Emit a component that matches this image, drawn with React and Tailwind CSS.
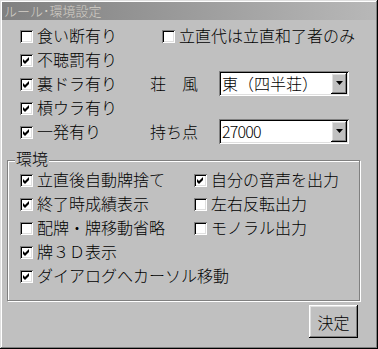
import React from 'react';

const sunken = "shadow-[inset_1px_1px_0_#808080,inset_-1px_-1px_0_#ffffff,inset_2px_2px_0_#000000,inset_-2px_-2px_0_#dfdfdf]";
const raised = "shadow-[inset_-1px_-1px_0_#000000,inset_1px_1px_0_#ffffff,inset_-2px_-2px_0_#808080,inset_2px_2px_0_#dfdfdf]";

function CheckBox({ checked, label, className = "" }) {
  return (
    <label className={"flex items-center gap-[4px] " + className}>
      <span className={"w-[13px] h-[13px] shrink-0 bg-white mt-[2px] " + sunken}>
        {checked && (
          <svg width="13" height="13" viewBox="0 0 13 13">
            <path d="M3 5 L5 7 L9 3 L9 6 L5 10 L3 8 Z" fill="#000" />
          </svg>
        )}
      </span>
      <span className="whitespace-nowrap">{label}</span>
    </label>
  );
}

function ComboBox({ value, digits }) {
  return (
    <div className={"w-[130px] h-[25px] bg-white flex items-center p-[2px] " + sunken}>
      <span className={"flex-1 pl-[1px] " + (digits ? "tracking-[-0.8px]" : "")}>
        {value}
      </span>
      <span className={"w-[16px] h-full bg-[#c0c0c0] flex items-center justify-center " + raised}>
        <svg width="7" height="4" viewBox="0 0 7 4">
          <path d="M0 0 H7 L3.5 4 Z" fill="#000" />
        </svg>
      </span>
    </div>
  );
}

export default function App() {
  return (
    <div className="w-[378px] h-[349px] bg-[#c0c0c0] p-[2px] flex flex-col text-black text-[16px] leading-[16px] font-light font-['Noto_Sans_CJK_JP',sans-serif] shadow-[inset_-1px_-1px_0_#000000,inset_1px_1px_0_#dfdfdf,inset_-2px_-2px_0_#808080,inset_2px_2px_0_#ffffff]">
      <div className="h-[18px] shrink-0 bg-gradient-to-r from-[#808080] to-[#b8b8b8] flex items-center pl-[2px] text-[13px] text-[#d4d0c8]">
        ルール･環境設定
      </div>

      <div className="mt-[3px] pl-[18px] flex flex-col">
        <div className="h-[24px] flex items-center">
          <CheckBox label="食い断有り" className="w-[142px]" />
          <CheckBox label="立直代は立直和了者のみ" />
        </div>
        <div className="h-[24px] flex items-center">
          <CheckBox checked label="不聴罰有り" />
        </div>
        <div className="h-[24px] flex items-center">
          <CheckBox checked label="裏ドラ有り" className="w-[130px]" />
          <span className="w-[69px]">荘　風</span>
          <ComboBox value="東（四半荘）" />
        </div>
        <div className="h-[24px] flex items-center">
          <CheckBox checked label="槓ウラ有り" />
        </div>
        <div className="h-[24px] flex items-center">
          <CheckBox checked label="一発有り" className="w-[130px]" />
          <span className="w-[69px]">持ち点</span>
          <ComboBox value="27000" digits />
        </div>
      </div>

      <div className="relative mt-[17px] ml-[5px] w-[353px] h-[141px] shrink-0 border border-[#808080] shadow-[1px_1px_0_#ffffff,inset_1px_1px_0_#ffffff] pt-[6px] pl-[12px]">
        <span className="absolute left-[7px] top-[-11px] px-[1px] bg-[#c0c0c0]">環境</span>
        <div className="h-[24px] flex items-center">
          <CheckBox checked label="立直後自動牌捨て" className="w-[174px]" />
          <CheckBox checked label="自分の音声を出力" />
        </div>
        <div className="h-[24px] flex items-center">
          <CheckBox checked label="終了時成績表示" className="w-[174px]" />
          <CheckBox label="左右反転出力" />
        </div>
        <div className="h-[24px] flex items-center">
          <CheckBox label="配牌・牌移動省略" className="w-[174px]" />
          <CheckBox label="モノラル出力" />
        </div>
        <div className="h-[24px] flex items-center">
          <CheckBox checked label="牌３Ｄ表示" />
        </div>
        <div className="h-[24px] flex items-center">
          <CheckBox checked label="ダイアログへカーソル移動" />
        </div>
      </div>

      <div className="flex justify-end mt-[4px] mr-[18px]">
        <button className={"w-[49px] h-[33px] bg-[#c0c0c0] flex items-center justify-center " + raised}>
          決定
        </button>
      </div>
    </div>
  );
}
